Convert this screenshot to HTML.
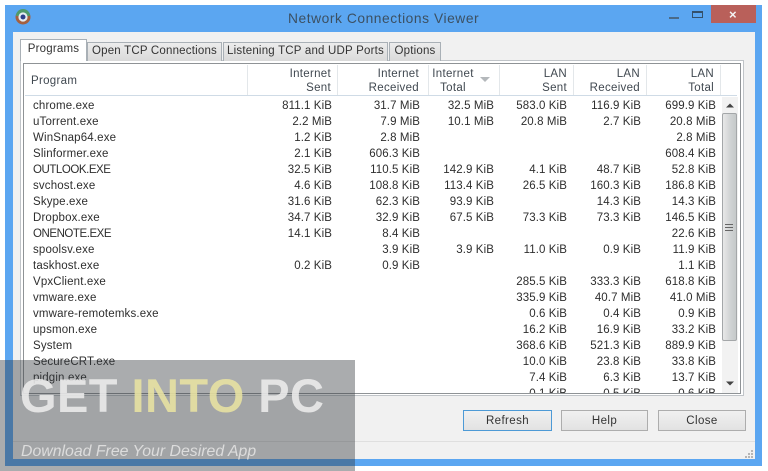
<!DOCTYPE html>
<html><head><meta charset="utf-8"><style>
html,body{margin:0;padding:0;width:768px;height:471px;overflow:hidden;background:#fff}
*{box-sizing:border-box}
body{font-family:"Liberation Sans",sans-serif;position:relative;color:#333;filter:blur(.25px)}
.a{position:absolute}
.win{left:5px;top:5px;width:757px;height:461px;background:#5ba6f1}
.client{left:13px;top:32px;width:742px;height:427px;background:#f1f1f1}
.title{left:288px;top:11px;font-size:13.8px;letter-spacing:.55px;color:#3c5062;white-space:nowrap}
.tab{top:42px;height:19px;background:linear-gradient(#ececec,#d9d9d9);border:1px solid #a9b0b6;border-bottom:0;font-size:11.5px;letter-spacing:.2px;line-height:17px;text-align:center;white-space:nowrap}
.panel{left:20px;top:60px;width:724px;height:336px;background:#fff;border:1px solid #c0c4c8}
.list{left:23px;top:63px;width:718px;height:331px;background:#fff;border:1px solid #8f9396;overflow:hidden}
.hd{font-size:11.5px;letter-spacing:.3px;line-height:14px;text-align:right;color:#404850;white-space:nowrap}
.sep{top:65px;width:1px;height:30px;background:#e3e7ea}
table{border-collapse:collapse;table-layout:fixed;position:absolute;width:696px}
td{height:16px;padding:0 5px 0 0;font-size:11.5px;letter-spacing:.1px;line-height:16px;text-align:right;white-space:nowrap;color:#2e2e2e}
td:first-child{text-align:left;padding-left:8px;letter-spacing:.15px}
td i{font-style:normal;letter-spacing:-.45px}
.btn{top:410px;height:21px;background:linear-gradient(#f0f0f0,#e2e2e2);border:1px solid #adadad;font-size:11.5px;letter-spacing:.4px;line-height:20px;text-align:center}
.ov{left:0;top:360px;width:355px;height:111px;background:rgba(52,58,62,.42)}
</style></head><body>
<div class="a win"></div>
<div class="a" style="left:711px;top:5px;width:45px;height:18px;background:#b9605a"></div>
<div class="a" style="left:729px;top:7px;color:#f4f4f4;font-size:13px;font-weight:bold;line-height:16px">×</div>
<div class="a" style="left:669px;top:17px;width:10px;height:2px;background:#4a6a88"></div>
<div class="a" style="left:692px;top:11px;width:11px;height:7px;border:1px solid #34506a;border-top-width:2px"></div>
<svg class="a" style="left:14px;top:8px" width="18" height="18" viewBox="0 0 18 18"><circle cx="9" cy="9" r="7.5" fill="#a5603f"/><path d="M2 8A7 7 0 0 1 16 8Z" fill="#4f9a6b"/><circle cx="9" cy="9" r="4.6" fill="#e6edf2"/><circle cx="9" cy="9" r="2.5" fill="#2d3f8a"/></svg>
<div class="a title">Network Connections Viewer</div>
<div class="a client"></div>
<div class="a panel"></div>
<div class="a tab" style="left:87px;width:135px">Open TCP Connections</div>
<div class="a tab" style="left:223px;width:165px">Listening TCP and UDP Ports</div>
<div class="a tab" style="left:389px;width:52px">Options</div>
<div class="a tab" style="left:20px;top:39px;width:67px;height:22px;background:#fff;line-height:18px;z-index:2">Programs</div>
<div class="a list"></div>
<div class="a" style="left:25px;top:95px;width:712px;height:1px;background:#cfdbe6"></div>
<div class="a hd" style="left:31px;top:74px;text-align:left">Program</div>
<div class="a hd" style="left:247px;width:84px;top:67px">Internet<br>Sent</div>
<div class="a hd" style="left:337px;width:82px;top:67px">Internet<br>Received</div>
<div class="a hd" style="left:432px;top:67px;text-align:center;width:42px">Internet<br>Total</div>
<svg class="a" style="left:480px;top:77px" width="10" height="6"><path d="M0 0H10L5 5Z" fill="#b4b8bb"/></svg>
<div class="a hd" style="left:500px;width:67px;top:67px">LAN<br>Sent</div>
<div class="a hd" style="left:573px;width:67px;top:67px">LAN<br>Received</div>
<div class="a hd" style="left:647px;width:67px;top:67px">LAN<br>Total</div>
<div class="a sep" style="left:247px"></div><div class="a sep" style="left:337px"></div><div class="a sep" style="left:428px"></div><div class="a sep" style="left:499px"></div><div class="a sep" style="left:573px"></div><div class="a sep" style="left:646px"></div><div class="a sep" style="left:720px"></div>
<div class="a" style="left:25px;top:97px;width:696px;height:296px;overflow:hidden">
<table style="left:0;top:1px"><colgroup><col style="width:222px"><col style="width:90px"><col style="width:88px"><col style="width:74px"><col style="width:73px"><col style="width:74px"><col style="width:75px"></colgroup>
<tr><td>chrome.exe</td><td>811.1 KiB</td><td>31.7 MiB</td><td>32.5 MiB</td><td>583.0 KiB</td><td>116.9 KiB</td><td>699.9 KiB</td></tr>
<tr><td>uTorrent.exe</td><td>2.2 MiB</td><td>7.9 MiB</td><td>10.1 MiB</td><td>20.8 MiB</td><td>2.7 KiB</td><td>20.8 MiB</td></tr>
<tr><td>WinSnap64.exe</td><td>1.2 KiB</td><td>2.8 MiB</td><td></td><td></td><td></td><td>2.8 MiB</td></tr>
<tr><td>Slinformer.exe</td><td>2.1 KiB</td><td>606.3 KiB</td><td></td><td></td><td></td><td>608.4 KiB</td></tr>
<tr><td><i>OUTLOOK.EXE</i></td><td>32.5 KiB</td><td>110.5 KiB</td><td>142.9 KiB</td><td>4.1 KiB</td><td>48.7 KiB</td><td>52.8 KiB</td></tr>
<tr><td>svchost.exe</td><td>4.6 KiB</td><td>108.8 KiB</td><td>113.4 KiB</td><td>26.5 KiB</td><td>160.3 KiB</td><td>186.8 KiB</td></tr>
<tr><td>Skype.exe</td><td>31.6 KiB</td><td>62.3 KiB</td><td>93.9 KiB</td><td></td><td>14.3 KiB</td><td>14.3 KiB</td></tr>
<tr><td>Dropbox.exe</td><td>34.7 KiB</td><td>32.9 KiB</td><td>67.5 KiB</td><td>73.3 KiB</td><td>73.3 KiB</td><td>146.5 KiB</td></tr>
<tr><td><i>ONENOTE.EXE</i></td><td>14.1 KiB</td><td>8.4 KiB</td><td></td><td></td><td></td><td>22.6 KiB</td></tr>
<tr><td>spoolsv.exe</td><td></td><td>3.9 KiB</td><td>3.9 KiB</td><td>11.0 KiB</td><td>0.9 KiB</td><td>11.9 KiB</td></tr>
<tr><td>taskhost.exe</td><td>0.2 KiB</td><td>0.9 KiB</td><td></td><td></td><td></td><td>1.1 KiB</td></tr>
<tr><td>VpxClient.exe</td><td></td><td></td><td></td><td>285.5 KiB</td><td>333.3 KiB</td><td>618.8 KiB</td></tr>
<tr><td>vmware.exe</td><td></td><td></td><td></td><td>335.9 KiB</td><td>40.7 MiB</td><td>41.0 MiB</td></tr>
<tr><td>vmware-remotemks.exe</td><td></td><td></td><td></td><td>0.6 KiB</td><td>0.4 KiB</td><td>0.9 KiB</td></tr>
<tr><td>upsmon.exe</td><td></td><td></td><td></td><td>16.2 KiB</td><td>16.9 KiB</td><td>33.2 KiB</td></tr>
<tr><td>System</td><td></td><td></td><td></td><td>368.6 KiB</td><td>521.3 KiB</td><td>889.9 KiB</td></tr>
<tr><td>SecureCRT.exe</td><td></td><td></td><td></td><td>10.0 KiB</td><td>23.8 KiB</td><td>33.8 KiB</td></tr>
<tr><td>pidgin.exe</td><td></td><td></td><td></td><td>7.4 KiB</td><td>6.3 KiB</td><td>13.7 KiB</td></tr>
<tr><td></td><td></td><td></td><td></td><td>0.1 KiB</td><td>0.5 KiB</td><td>0.6 KiB</td></tr>
</table></div>
<div class="a" style="left:722px;top:97px;width:16px;height:296px;background:#f2f2f2"></div>
<svg class="a" style="left:726px;top:103px" width="9" height="5"><path d="M0 4.5H8L4 .5Z" fill="#444"/></svg>
<svg class="a" style="left:726px;top:381px" width="9" height="5"><path d="M0 .5H8L4 4.5Z" fill="#444"/></svg>
<div class="a" style="left:722px;top:113px;width:15px;height:228px;background:linear-gradient(90deg,#e8e8e8,#cfd2d3 60%,#c6c9ca);border:1px solid #a4a7a9;border-radius:2px"></div>
<div class="a" style="left:725px;top:224px;width:8px;height:7px;border-top:1px solid #666;border-bottom:1px solid #666"></div>
<div class="a" style="left:725px;top:227px;width:8px;height:1px;background:#666"></div>
<div class="a btn" style="left:463px;width:89px;border-color:#4d9ad6">Refresh</div>
<div class="a btn" style="left:561px;width:87px">Help</div>
<div class="a btn" style="left:658px;width:88px">Close</div>
<div class="a" style="left:13px;top:441px;width:742px;height:1px;background:#dfdfdf"></div>
<svg class="a" style="left:745px;top:450px" width="9" height="8"><g fill="#b5b5b5"><rect x="6" y="0" width="2" height="2"/><rect x="3" y="3" width="2" height="2"/><rect x="6" y="3" width="2" height="2"/><rect x="0" y="6" width="2" height="2"/><rect x="3" y="6" width="2" height="2"/><rect x="6" y="6" width="2" height="2"/></g></svg>
<div class="a ov"></div>
<div class="a" style="left:20px;top:369px;font-size:47px;font-weight:bold;line-height:54px;white-space:nowrap;color:#ececec;letter-spacing:.45px;opacity:.88">GET <span style="color:#e9e3a2">INTO</span> PC</div>
<div class="a" style="left:21px;top:442px;font-size:15.85px;font-style:italic;line-height:20px;color:#dcdcdc;white-space:nowrap">Download Free Your Desired App</div>
</body></html>
